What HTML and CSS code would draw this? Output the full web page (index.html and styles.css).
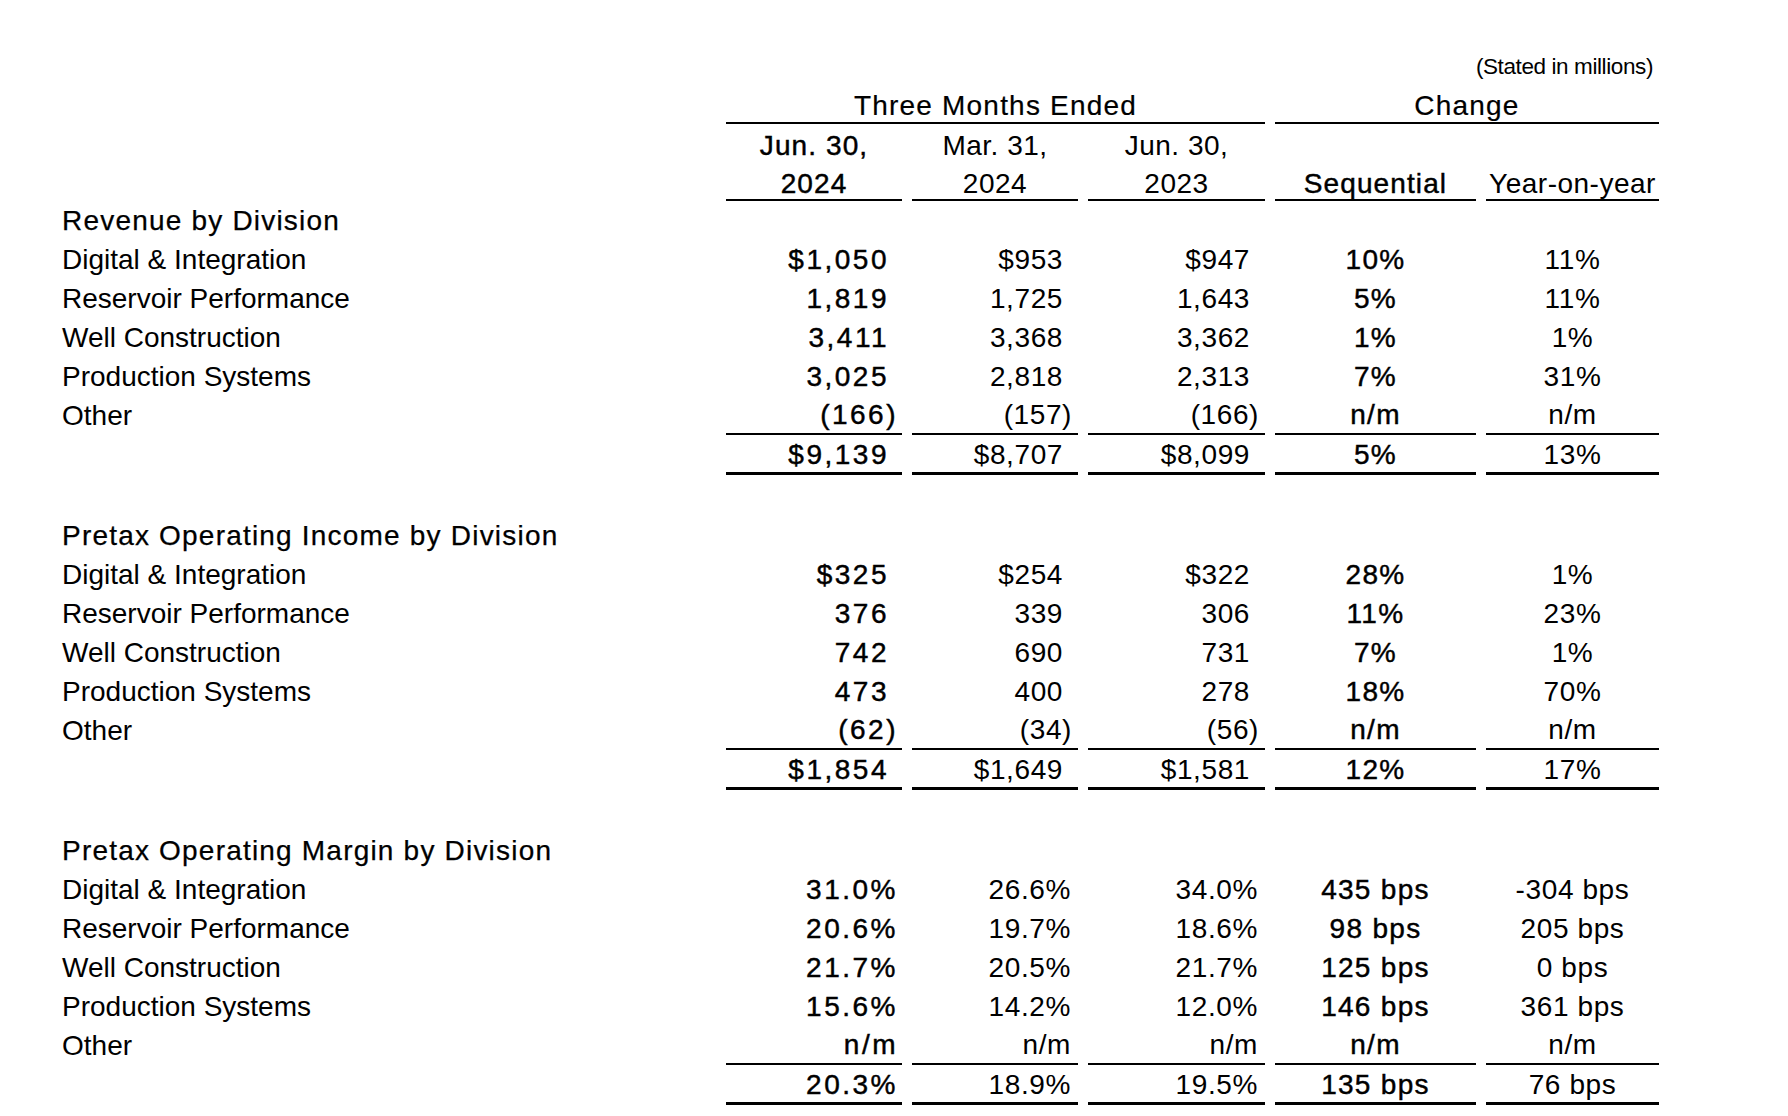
FILE: index.html
```html
<!DOCTYPE html>
<html lang="en">
<head>
<meta charset="utf-8">
<title>Revenue, Pretax Operating Income and Margin by Division</title>
<link rel="stylesheet" href="styles.css">
</head>
<body>
<div class="sheet">
  <div class="stated">(Stated in millions)</div>

  <div class="row hrow1">
    <div class="lbl"></div>
    <div class="grp grp3">Three Months Ended</div>
    <div class="grp grp2">Change</div>
  </div>
  <div class="row hrow2">
    <div class="lbl"></div>
    <div class="hc b">Jun. 30,<br>2024</div>
    <div class="hc">Mar. 31,<br>2024</div>
    <div class="hc">Jun. 30,<br>2023</div>
    <div class="hc b single">Sequential</div>
    <div class="hc single">Year-on-year</div>
  </div>

  <section class="block">
    <div class="row"><div class="sec">Revenue by Division</div></div>
    <div class="row"><div class="lbl">Digital &amp; Integration</div><div class="num b pos">$1,050</div><div class="num pos">$953</div><div class="num pos">$947</div><div class="chg b">10%</div><div class="chg">11%</div></div>
    <div class="row"><div class="lbl">Reservoir Performance</div><div class="num b pos">1,819</div><div class="num pos">1,725</div><div class="num pos">1,643</div><div class="chg b">5%</div><div class="chg">11%</div></div>
    <div class="row"><div class="lbl">Well Construction</div><div class="num b pos">3,411</div><div class="num pos">3,368</div><div class="num pos">3,362</div><div class="chg b">1%</div><div class="chg">1%</div></div>
    <div class="row"><div class="lbl">Production Systems</div><div class="num b pos">3,025</div><div class="num pos">2,818</div><div class="num pos">2,313</div><div class="chg b">7%</div><div class="chg">31%</div></div>
    <div class="row sub"><div class="lbl">Other</div><div class="num b neg">(166)</div><div class="num neg">(157)</div><div class="num neg">(166)</div><div class="chg b">n/m</div><div class="chg">n/m</div></div>
    <div class="row total"><div class="lbl"></div><div class="num b pos">$9,139</div><div class="num pos">$8,707</div><div class="num pos">$8,099</div><div class="chg b">5%</div><div class="chg">13%</div></div>
  </section>

  <section class="block">
    <div class="row"><div class="sec">Pretax Operating Income by Division</div></div>
    <div class="row"><div class="lbl">Digital &amp; Integration</div><div class="num b pos">$325</div><div class="num pos">$254</div><div class="num pos">$322</div><div class="chg b">28%</div><div class="chg">1%</div></div>
    <div class="row"><div class="lbl">Reservoir Performance</div><div class="num b pos">376</div><div class="num pos">339</div><div class="num pos">306</div><div class="chg b">11%</div><div class="chg">23%</div></div>
    <div class="row"><div class="lbl">Well Construction</div><div class="num b pos">742</div><div class="num pos">690</div><div class="num pos">731</div><div class="chg b">7%</div><div class="chg">1%</div></div>
    <div class="row"><div class="lbl">Production Systems</div><div class="num b pos">473</div><div class="num pos">400</div><div class="num pos">278</div><div class="chg b">18%</div><div class="chg">70%</div></div>
    <div class="row sub"><div class="lbl">Other</div><div class="num b neg">(62)</div><div class="num neg">(34)</div><div class="num neg">(56)</div><div class="chg b">n/m</div><div class="chg">n/m</div></div>
    <div class="row total"><div class="lbl"></div><div class="num b pos">$1,854</div><div class="num pos">$1,649</div><div class="num pos">$1,581</div><div class="chg b">12%</div><div class="chg">17%</div></div>
  </section>

  <section class="block">
    <div class="row"><div class="sec">Pretax Operating Margin by Division</div></div>
    <div class="row"><div class="lbl">Digital &amp; Integration</div><div class="num b pct">31.0%</div><div class="num pct">26.6%</div><div class="num pct">34.0%</div><div class="chg b">435 bps</div><div class="chg">-304 bps</div></div>
    <div class="row"><div class="lbl">Reservoir Performance</div><div class="num b pct">20.6%</div><div class="num pct">19.7%</div><div class="num pct">18.6%</div><div class="chg b">98 bps</div><div class="chg">205 bps</div></div>
    <div class="row"><div class="lbl">Well Construction</div><div class="num b pct">21.7%</div><div class="num pct">20.5%</div><div class="num pct">21.7%</div><div class="chg b">125 bps</div><div class="chg">0 bps</div></div>
    <div class="row"><div class="lbl">Production Systems</div><div class="num b pct">15.6%</div><div class="num pct">14.2%</div><div class="num pct">12.0%</div><div class="chg b">146 bps</div><div class="chg">361 bps</div></div>
    <div class="row sub"><div class="lbl">Other</div><div class="num b pct">n/m</div><div class="num pct">n/m</div><div class="num pct">n/m</div><div class="chg b">n/m</div><div class="chg">n/m</div></div>
    <div class="row total"><div class="lbl"></div><div class="num b pct">20.3%</div><div class="num pct">18.9%</div><div class="num pct">19.5%</div><div class="chg b">135 bps</div><div class="chg">76 bps</div></div>
  </section>
</div>
</body>
</html>
```

FILE: styles.css
```css
* {
  box-sizing: border-box;
}

html,
body {
  margin: 0;
  padding: 0;
  background: #ffffff;
}

body {
  font-family: "Liberation Sans", Arial, Helvetica, sans-serif;
  font-size: 28px;
  color: #000000;
}

.sheet {
  width: 1788px;
  height: 1116px;
  padding: 48px 0 0 62px;
  overflow: hidden;
}

.stated {
  width: 1591px;
  height: 38px;
  line-height: 38px;
  text-align: right;
  font-size: 22.5px;
  letter-spacing: -0.4px;
}

.row {
  display: grid;
  grid-template-columns: 654px 176px 166px 177px 201px 173px;
  grid-template-rows: 39px;
  column-gap: 10px;
  height: 39px;
  line-height: 39px;
  white-space: nowrap;
}

/* header rows */
.hrow1 {
  height: 38px;
  grid-template-rows: 38px;
}

.grp {
  text-align: center;
  border-bottom: 2px solid #000;
  padding-top: 3px;
  line-height: 33px;
  letter-spacing: 1.2px;
  -webkit-text-stroke: 0.2px #000;
}

.grp3 {
  grid-column: 2 / span 3;
}

.grp2 {
  grid-column: 5 / span 2;
}

.hrow2 {
  height: 77px;
  grid-template-rows: 77px;
}

.hc {
  text-align: center;
  border-bottom: 2px solid #000;
  line-height: 38px;
  padding-top: 3px;
  overflow: visible;
  letter-spacing: 0.5px;
}

.hc.single {
  padding-top: 41px;
}

/* section headings */
.sec {
  letter-spacing: 1.2px;
  -webkit-text-stroke: 0.25px #000;
}

/* strong (current quarter / sequential) column */
.b {
  letter-spacing: 1.1px;
  -webkit-text-stroke: 0.45px #000;
}

.num,
.chg {
  letter-spacing: 0.6px;
}

.num.b {
  letter-spacing: 2.5px;
}

.chg.b {
  letter-spacing: 1.3px;
}

.num {
  text-align: right;
}

.num.pos {
  padding-right: 15px;
}

.num.neg {
  padding-right: 6px;
}

.num.pct {
  padding-right: 7px;
}

.num.b.pos {
  padding-right: 13px;
}

.num.b.neg,
.num.b.pct {
  padding-right: 4px;
}

.chg {
  text-align: center;
}

/* sub-total rule */
.sub > .num,
.sub > .chg {
  border-bottom: 2px solid #000;
  line-height: 37px;
}

/* totals with heavy rule */
.total {
  height: 40px;
  grid-template-rows: 40px;
}

.total > .num,
.total > .chg {
  border-bottom: 3px solid #000;
  padding-top: 3px;
  line-height: 34px;
}

.block + .block {
  margin-top: 41px;
}
```
